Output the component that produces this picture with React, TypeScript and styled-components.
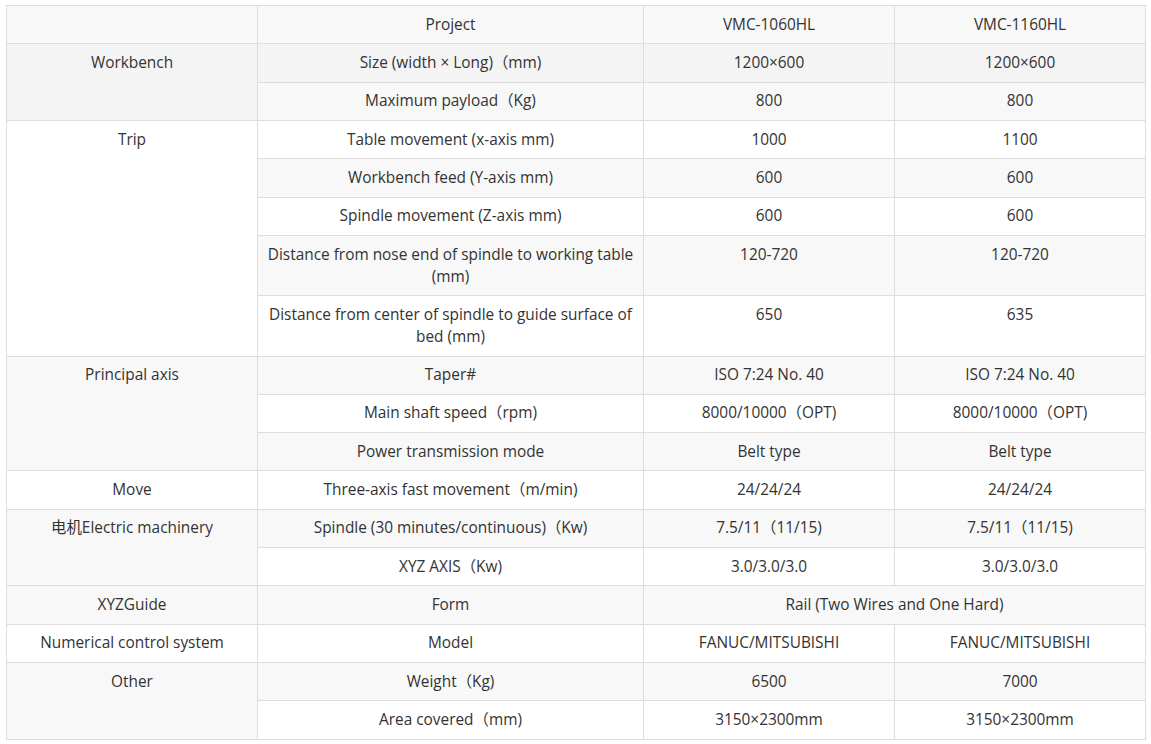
import React from 'react'
import styled, { createGlobalStyle } from 'styled-components'

const GlobalStyle = createGlobalStyle`
  html, body {
    margin: 0;
    padding: 0;
    background: #ffffff;
  }
  body {
    font-family: 'Open Sans', 'Noto Sans CJK SC', sans-serif;
  }
`

const Page = styled.div`
  padding: 5px 6px;
`

const SpecTable = styled.table`
  width: 1139px;
  border-collapse: collapse;
  table-layout: fixed;
  font-size: 15.4px;
  line-height: 22px;
  color: #333333;
`

const Row = styled.tr<{ $shade?: 'light' | 'dark' }>`
  background: ${(p) => (p.$shade === 'dark' ? '#f4f4f4' : p.$shade === 'light' ? '#f8f8f8' : '#ffffff')};
`

const Cell = styled.td`
  border: 1px solid #dddddd;
  padding: 7.67px 8px;
  text-align: center;
  vertical-align: top;
`

type Line = {
  group?: string
  span?: number
  item: string
  a: string
  b?: string
}

const lines: Line[] = [
  { group: '', item: 'Project', a: 'VMC-1060HL', b: 'VMC-1160HL' },
  { group: 'Workbench', span: 2, item: 'Size (width × Long)（mm)', a: '1200×600', b: '1200×600' },
  { item: 'Maximum payload（Kg)', a: '800', b: '800' },
  { group: 'Trip', span: 5, item: 'Table movement (x-axis mm)', a: '1000', b: '1100' },
  { item: 'Workbench feed (Y-axis mm)', a: '600', b: '600' },
  { item: 'Spindle movement (Z-axis mm)', a: '600', b: '600' },
  { item: 'Distance from nose end of spindle to working table (mm)', a: '120-720', b: '120-720' },
  { item: 'Distance from center of spindle to guide surface of bed (mm)', a: '650', b: '635' },
  { group: 'Principal axis', span: 3, item: 'Taper#', a: 'ISO 7:24 No. 40', b: 'ISO 7:24 No. 40' },
  { item: 'Main shaft speed（rpm)', a: '8000/10000（OPT)', b: '8000/10000（OPT)' },
  { item: 'Power transmission mode', a: 'Belt type', b: 'Belt type' },
  { group: 'Move', span: 1, item: 'Three-axis fast movement（m/min)', a: '24/24/24', b: '24/24/24' },
  { group: '电机Electric machinery', span: 2, item: 'Spindle (30 minutes/continuous)（Kw)', a: '7.5/11（11/15)', b: '7.5/11（11/15)' },
  { item: 'XYZ AXIS（Kw)', a: '3.0/3.0/3.0', b: '3.0/3.0/3.0' },
  { group: 'XYZGuide', span: 1, item: 'Form', a: 'Rail (Two Wires and One Hard)' },
  { group: 'Numerical control system', span: 1, item: 'Model', a: 'FANUC/MITSUBISHI', b: 'FANUC/MITSUBISHI' },
  { group: 'Other', span: 2, item: 'Weight（Kg)', a: '6500', b: '7000' },
  { item: 'Area covered（mm)', a: '3150×2300mm', b: '3150×2300mm' },
]

function App() {
  return (
    <Page>
      <GlobalStyle />
      <SpecTable>
        <colgroup>
          <col style={{ width: 251 }} />
          <col style={{ width: 386 }} />
          <col style={{ width: 251 }} />
          <col style={{ width: 251 }} />
        </colgroup>
        <tbody>
          {lines.map((l, i) => (
            <Row key={i} $shade={i === 1 ? 'dark' : i % 2 === 0 ? 'light' : undefined}>
              {l.group !== undefined && <Cell rowSpan={l.span ?? 1}>{l.group}</Cell>}
              <Cell>{l.item}</Cell>
              {l.b === undefined ? (
                <Cell colSpan={2}>{l.a}</Cell>
              ) : (
                <>
                  <Cell>{l.a}</Cell>
                  <Cell>{l.b}</Cell>
                </>
              )}
            </Row>
          ))}
        </tbody>
      </SpecTable>
    </Page>
  )
}

export default App
